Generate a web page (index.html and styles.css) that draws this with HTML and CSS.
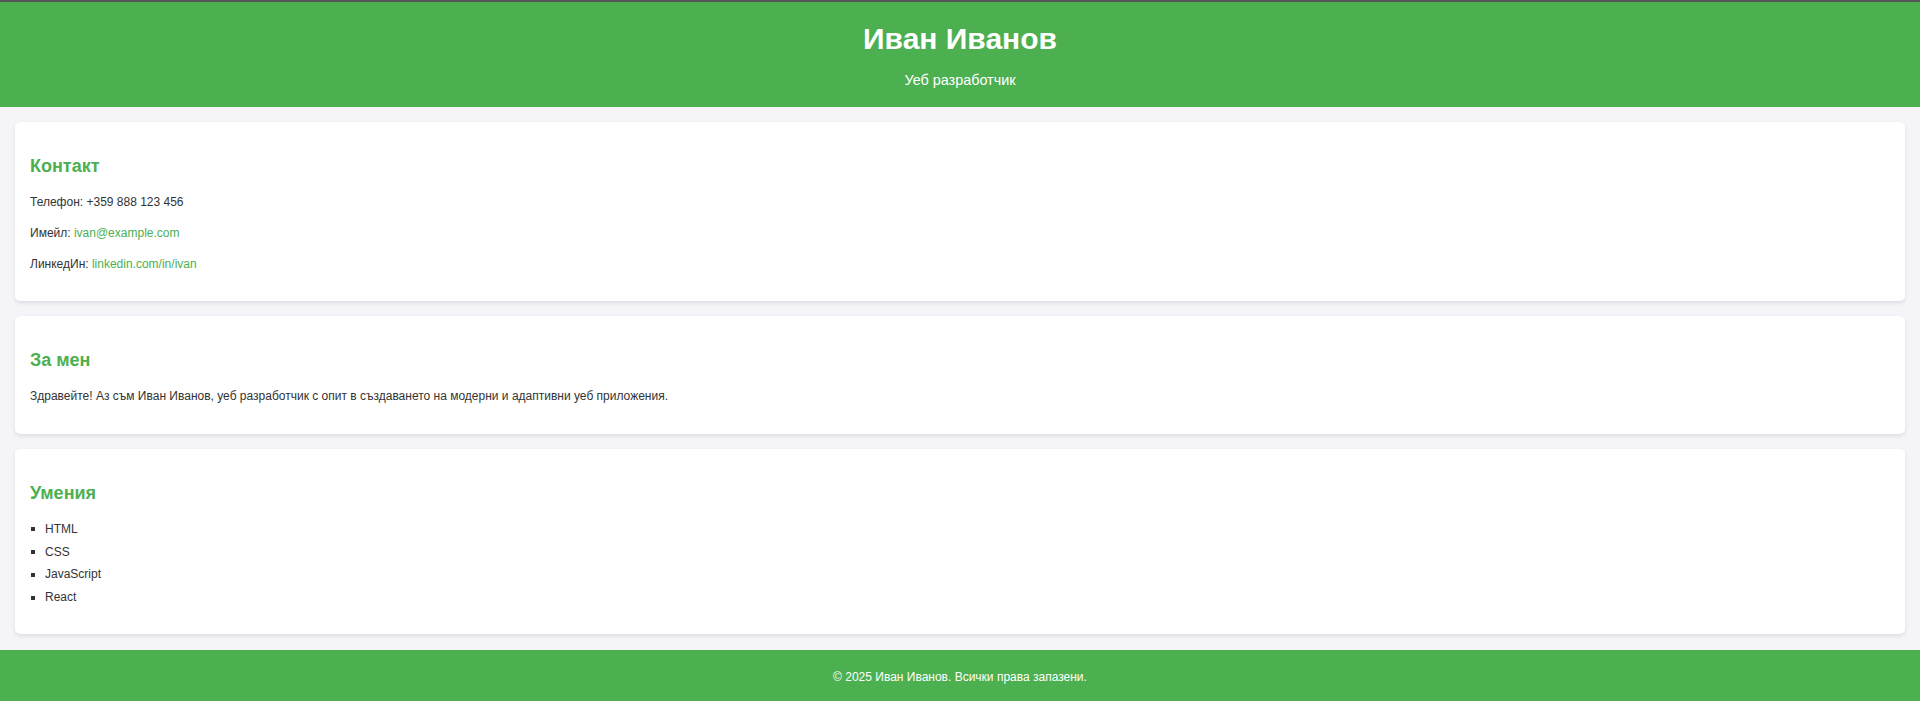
FILE: index.html
```html
<!DOCTYPE html>
<html lang="bg">
<head>
<meta charset="utf-8">
<title>Иван Иванов</title>
<link rel="stylesheet" href="styles.css">
</head>
<body>
<header class="site-header">
  <h1 class="site-title">Иван Иванов</h1>
  <p class="site-subtitle">Уеб разработчик</p>
</header>
<main class="content">
  <section class="card">
    <h2 class="card-title">Контакт</h2>
    <p class="card-text">Телефон: +359 888 123 456</p>
    <p class="card-text">Имейл: <a class="link" href="#">ivan@example.com</a></p>
    <p class="card-text">ЛинкедИн: <a class="link" href="#">linkedin.com/in/ivan</a></p>
  </section>
  <section class="card">
    <h2 class="card-title">За мен</h2>
    <p class="card-text">Здравейте! Аз съм Иван Иванов, уеб разработчик с опит в създаването на модерни и адаптивни уеб приложения.</p>
  </section>
  <section class="card">
    <h2 class="card-title">Умения</h2>
    <ul class="skills">
      <li class="skill">HTML</li>
      <li class="skill">CSS</li>
      <li class="skill">JavaScript</li>
      <li class="skill">React</li>
    </ul>
  </section>
</main>
<footer class="site-footer">
  <p class="footer-text">© 2025 Иван Иванов. Всички права запазени.</p>
</footer>
</body>
</html>
```

FILE: styles.css
```css
* { box-sizing: border-box; }

body {
  margin: 0;
  background: #f4f4f9;
  color: #333;
  font-family: "Liberation Sans", Arial, sans-serif;
  font-size: 12px;
  line-height: 1.6;
}

.site-header {
  border-top: 2px solid #555;
  background: #4caf50;
  color: #fff;
  text-align: center;
  padding: 20px 0 15px;
}

.site-title {
  margin: 0;
  font-size: 30px;
  line-height: 34.5px;
  font-weight: bold;
}

.site-subtitle {
  margin: 12px 0 0;
  font-size: 14.4px;
  line-height: 23px;
}

.content {
  padding: 15px 15px 16px;
  display: flex;
  flex-direction: column;
  gap: 15px;
}

.card {
  background: #fff;
  border-radius: 5px;
  box-shadow: 0 2px 4px rgba(0, 0, 0, 0.1);
  padding: 15px;
}

.card-title {
  color: #4caf50;
  font-size: 18px;
  line-height: 20.7px;
  margin: 19px 0 16.5px;
}

.card-text {
  margin: 12px 0;
}

.link {
  color: #4caf50;
  text-decoration: none;
}

.skills {
  list-style: none;
  margin: 12px 0;
  padding: 0 0 0 1px;
}

.skill {
  margin-bottom: 3.6px;
}

.skill::before {
  content: "";
  display: inline-block;
  width: 4px;
  height: 4px;
  margin: 0 10px 1.5px 0;
  background: #333;
}

.site-footer {
  background: #4caf50;
  color: #fff;
  text-align: center;
  padding: 18px 0;
}

.footer-text {
  margin: 0;
}
```
